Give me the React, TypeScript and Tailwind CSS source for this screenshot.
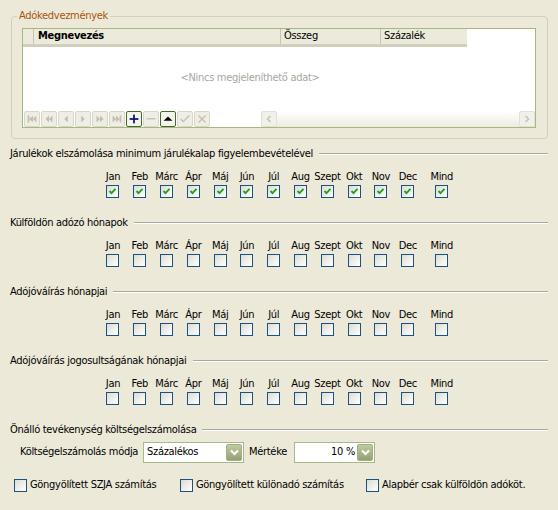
import React from 'react';

const months = ['Jan', 'Feb', 'Márc', 'Ápr', 'Máj', 'Jún', 'Júl', 'Aug', 'Szept', 'Okt', 'Nov', 'Dec'];

const CheckBox: React.FC<{ checked?: boolean }> = ({ checked }) => (
  <span className="w-[13px] h-[13px] shrink-0 border border-[#1C5180] bg-linear-to-br from-[#DCDCD5] to-white flex items-center justify-center">
    {checked && (
      <svg width="9" height="9" viewBox="0 0 9 9">
        <polyline points="1.5,4 3.5,6.2 7.5,1.8" fill="none" stroke="#21A121" strokeWidth="1.9" />
      </svg>
    )}
  </span>
);

const SectionHeading: React.FC<{ title: string }> = ({ title }) => (
  <div className="flex items-center gap-[6px] pl-[10px] pr-[10px] h-[13px]">
    <span className="whitespace-nowrap leading-[13px]">{title}</span>
    <div className="flex-1 h-[2px] border-t border-[#ACA899] border-b border-b-white" />
  </div>
);

const MonthRow: React.FC<{ checked?: boolean }> = ({ checked }) => (
  <div className="flex ml-[99.6px] mt-[10px]">
    {[...months, 'Mind'].map((m) => (
      <div key={m} className={`w-[26.8px] flex flex-col items-center ${m === 'Mind' ? 'ml-[7.2px]' : ''}`}>
        <span className="h-[13px] leading-[13px] whitespace-nowrap">{m}</span>
        <span className="mt-[2px]">
          <CheckBox checked={checked} />
        </span>
      </div>
    ))}
  </div>
);

const G = '#C3BFAC';

const NavIcon: React.FC<{ kind: string }> = ({ kind }) => {
  const tri = (x: number, dir: 1 | -1, c = G) =>
    dir === 1 ? (
      <polygon key={x} points={`${x},4 ${x + 4},8 ${x},12`} fill={c} />
    ) : (
      <polygon key={x} points={`${x + 4},4 ${x},8 ${x + 4},12`} fill={c} />
    );
  let body: React.ReactNode = null;
  switch (kind) {
    case 'first':
      body = [<rect key="b" x="3" y="4" width="2" height="8" fill={G} />, tri(5, -1), tri(9, -1)];
      break;
    case 'prevp':
      body = [tri(4, -1), tri(8, -1)];
      break;
    case 'prev':
      body = tri(6, -1);
      break;
    case 'next':
      body = tri(6, 1);
      break;
    case 'nextp':
      body = [tri(4, 1), tri(8, 1)];
      break;
    case 'last':
      body = [tri(3, 1), tri(7, 1), <rect key="b" x="11" y="4" width="2" height="8" fill={G} />];
      break;
    case 'plus':
      body = [
        <rect key="h" x="3" y="7" width="10" height="2" fill="#10107E" />,
        <rect key="v" x="7" y="3" width="2" height="10" fill="#10107E" />,
      ];
      break;
    case 'minus':
      body = <rect x="3" y="7" width="10" height="1.5" fill={G} />;
      break;
    case 'up':
      body = <polygon points="3,10 8,5 13,10" fill="#000" />;
      break;
    case 'ok':
      body = <polyline points="3,8 6,11 13,4" fill="none" stroke={G} strokeWidth="1.6" />;
      break;
    case 'cancel':
      body = (
        <g stroke={G} strokeWidth="1.4">
          <line x1="4" y1="4" x2="12" y2="12" />
          <line x1="12" y1="4" x2="4" y2="12" />
        </g>
      );
      break;
  }
  return (
    <svg width="16" height="16" viewBox="0 0 16 16">
      {body}
    </svg>
  );
};

const navButtons = [
  { k: 'first' },
  { k: 'prevp' },
  { k: 'prev' },
  { k: 'next' },
  { k: 'nextp' },
  { k: 'last' },
  { k: 'plus', active: true },
  { k: 'minus' },
  { k: 'up', active: true },
  { k: 'ok' },
  { k: 'cancel' },
];

const Chevron: React.FC<{ color?: string }> = ({ color = '#fff' }) => (
  <svg width="9" height="7" viewBox="0 0 9 7">
    <polyline points="1,1.5 4.5,5 8,1.5" fill="none" stroke={color} strokeWidth="2" />
  </svg>
);

const DropButton = () => (
  <span className="w-[16px] h-[17px] mr-px rounded-[2px] bg-linear-to-b from-[#BFCC9F] to-[#93A173] border border-[#A4B086] flex items-center justify-center">
    <Chevron />
  </span>
);

export default function App() {
  return (
    <div
      className="w-[558px] h-[510px] bg-[#ECE9D8] text-black text-[11px] tracking-[-0.3px] overflow-hidden"
      style={{ fontFamily: '"DejaVu Sans Condensed", "Liberation Sans", sans-serif' }}
    >
      <div className="pt-[16px]">
        {/* Adókedvezmények group */}
        <div className="relative ml-[11px] w-[537px] h-[123px] border border-[#D0D0BF] rounded-[4px]">
          <span className="absolute left-[5px] top-[-8px] px-[2px] bg-[#ECE9D8] text-[#A8540A] leading-[13px]">
            Adókedvezmények
          </span>
          <div className="mt-[11px] ml-[10px] w-[514px] h-[100px] border border-[#A4B97F] bg-white flex flex-col">
            <div className="flex h-[18px] shrink-0">
              <div className="w-[444px] flex bg-[#EBEADB] border-b-[3px] border-[#D2CEBE]">
                <div className="w-[10px]" />
                <div className="w-[247px] flex items-center border-l border-[#C7C5B2]">
                  <span className="pl-[4px] font-bold">Megnevezés</span>
                </div>
                <div className="w-[100px] flex items-center border-l border-[#C7C5B2]">
                  <span className="pl-[3px]">Összeg</span>
                </div>
                <div className="flex-1 flex items-center border-l border-[#C7C5B2]">
                  <span className="pl-[3px]">Százalék</span>
                </div>
              </div>
            </div>
            <div className="flex-1 flex items-center justify-center pr-[58px] text-[#A7A6A0]">
              &lt;Nincs megjeleníthető adat&gt;
            </div>
            <div className="h-[17px] flex items-start shrink-0 pt-px">
              <div className="flex gap-px pl-[1px] w-[238px]">
                {navButtons.map((b) => (
                  <span
                    key={b.k}
                    className={`w-[16px] h-[16px] rounded-[2px] flex items-center justify-center ${
                      b.active
                        ? 'border border-[#466B26] bg-[#F4F3EE]'
                        : 'border border-[#DAD7C8] bg-[#EFEEE6]'
                    }`}
                  >
                    <NavIcon kind={b.k} />
                  </span>
                ))}
              </div>
              <div className="flex-1 h-[16px] flex justify-between bg-linear-to-b from-white to-[#EDEBE1]">
                <span className="w-[16px] h-[16px] border border-[#E3E1D6] rounded-[2px] bg-[#F1F0EA] flex items-center justify-center">
                  <svg width="6" height="8" viewBox="0 0 6 8">
                    <polyline points="4.5,1 1.5,4 4.5,7" fill="none" stroke="#C6C4B8" strokeWidth="1.6" />
                  </svg>
                </span>
                <span className="w-[16px] h-[16px] border border-[#E3E1D6] rounded-[2px] bg-[#F1F0EA] flex items-center justify-center">
                  <svg width="6" height="8" viewBox="0 0 6 8">
                    <polyline points="1.5,1 4.5,4 1.5,7" fill="none" stroke="#C6C4B8" strokeWidth="1.6" />
                  </svg>
                </span>
              </div>
            </div>
          </div>
        </div>

        <div className="mt-[8px]">
          <SectionHeading title="Járulékok elszámolása minimum járulékalap figyelembevételével" />
          <MonthRow checked />
        </div>
        <div className="mt-[18px]">
          <SectionHeading title="Külföldön adózó hónapok" />
          <MonthRow />
        </div>
        <div className="mt-[18px]">
          <SectionHeading title="Adójóváírás hónapjai" />
          <MonthRow />
        </div>
        <div className="mt-[18px]">
          <SectionHeading title="Adójóváírás jogosultságának hónapjai" />
          <MonthRow />
        </div>

        <div className="mt-[18px]">
          <SectionHeading title="Önálló tevékenység költségelszámolása" />
          <div className="flex items-center mt-[6px] h-[21px] pl-[20px]">
            <span className="w-[123px] whitespace-nowrap">Költségelszámolás módja</span>
            <div className="w-[101px] h-[21px] border border-[#A5B98A] bg-white flex items-center">
              <span className="flex-1 pl-[3px]">Százalékos</span>
              <DropButton />
            </div>
            <span className="ml-[5px] w-[45px]">Mértéke</span>
            <div className="w-[81px] h-[21px] border border-[#A5B98A] bg-white flex items-center">
              <span className="flex-1 text-right pr-[2px]">10 %</span>
              <DropButton />
            </div>
          </div>
          <div className="flex items-center mt-[14px] pl-[14px]">
            <label className="w-[166px] flex items-center gap-[3px]">
              <CheckBox />
              <span className="whitespace-nowrap">Göngyölített SZJA számítás</span>
            </label>
            <label className="w-[186px] flex items-center gap-[3px]">
              <CheckBox />
              <span className="whitespace-nowrap">Göngyölített különadó számítás</span>
            </label>
            <label className="flex items-center gap-[3px]">
              <CheckBox />
              <span className="whitespace-nowrap">Alapbér csak külföldön adóköt.</span>
            </label>
          </div>
        </div>
      </div>
    </div>
  );
}
